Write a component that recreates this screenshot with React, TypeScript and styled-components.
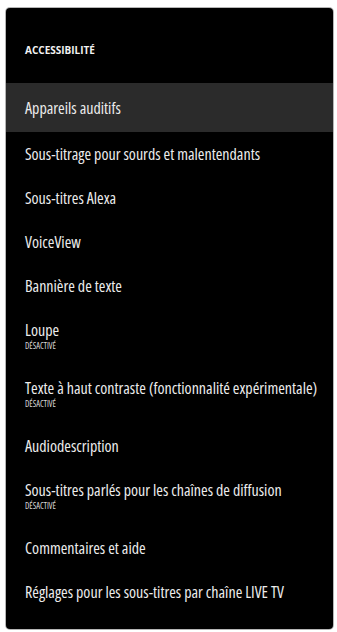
import styled, { createGlobalStyle } from 'styled-components';

const GlobalStyle = createGlobalStyle`
  html, body {
    margin: 0;
    padding: 0;
    background: #fff;
  }
  body {
    font-family: "Open Sans", "Noto Sans", sans-serif;
  }
`;

const Page = styled.div`
  padding: 8px 4px 3px 6px;
`;

const Panel = styled.div`
  width: 327px;
  height: 621px;
  box-sizing: border-box;
  background: #000;
  border-radius: 4px;
  box-shadow: 0 0 0 1px rgba(90, 90, 90, 0.45);
  overflow: hidden;
  display: flex;
  flex-direction: column;
`;

const Header = styled.div`
  padding: 37px 19px 28px;
  font-size: 10px;
  line-height: 10px;
  font-weight: 700;
  font-stretch: 97%;
  text-transform: uppercase;
  color: #f2f2f2;
`;

const List = styled.ul`
  list-style: none;
  margin: 0;
  padding: 0 0 15px;
  display: flex;
  flex-direction: column;
`;

const Row = styled.li<{ $selected?: boolean }>`
  padding: ${({ $selected }) => ($selected ? '15.5px 19px' : '13px 19px')};
  background: ${({ $selected }) => ($selected ? '#2b2b2b' : 'transparent')};
  display: flex;
  flex-direction: column;
`;

const Title = styled.span`
  font-size: 16px;
  line-height: 18px;
  font-weight: 500;
  font-stretch: 81%;
  color: #ececec;
  white-space: nowrap;
`;

const Sub = styled.span`
  margin: 2px 0;
  font-size: 8.5px;
  line-height: 10px;
  font-weight: 500;
  font-stretch: 78%;
  text-transform: uppercase;
  color: #d8d8d8;
`;

interface Item {
  label: string;
  status?: string;
}

const items: Item[] = [
  { label: 'Appareils auditifs' },
  { label: 'Sous-titrage pour sourds et malentendants' },
  { label: 'Sous-titres Alexa' },
  { label: 'VoiceView' },
  { label: 'Bannière de texte' },
  { label: 'Loupe', status: 'Désactivé' },
  { label: 'Texte à haut contraste (fonctionnalité expérimentale)', status: 'Désactivé' },
  { label: 'Audiodescription' },
  { label: 'Sous-titres parlés pour les chaînes de diffusion', status: 'Désactivé' },
  { label: 'Commentaires et aide' },
  { label: 'Réglages pour les sous-titres par chaîne LIVE TV' },
];

export default function App() {
  return (
    <>
      <GlobalStyle />
      <Page>
        <Panel>
          <Header>Accessibilité</Header>
          <List>
            {items.map((item, i) => (
              <Row key={item.label} $selected={i === 0}>
                <Title>{item.label}</Title>
                {item.status && <Sub>{item.status}</Sub>}
              </Row>
            ))}
          </List>
        </Panel>
      </Page>
    </>
  );
}
